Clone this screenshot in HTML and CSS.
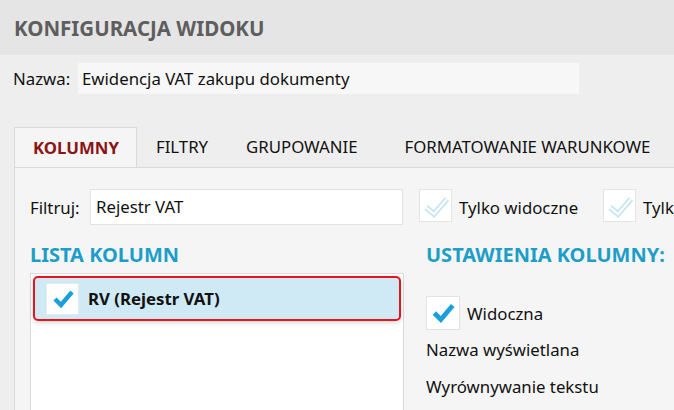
FILE: index.html
```html
<!DOCTYPE html>
<html lang="pl">
<head>
<meta charset="UTF-8">
<title>Konfiguracja widoku</title>
<link rel="stylesheet" href="styles.css">
</head>
<body>
    <div class="header">
        <h1>KONFIGURACJA WIDOKU</h1>
    </div>
    <div class="name-row">
        <span class="label">Nazwa:</span>
        <div class="name-input">Ewidencja VAT zakupu dokumenty</div>
    </div>

    <div class="tabs">
        <div class="tab active">KOLUMNY</div>
        <div class="tab">FILTRY</div>
        <div class="tab">GRUPOWANIE</div>
        <div class="tab wide">FORMATOWANIE WARUNKOWE</div>
    </div>

    <div class="panel">
        <div class="filter-row">
            <span class="label">Filtruj:</span>
            <div class="filter-input">Rejestr VAT</div>
            <div class="check faded">
                <svg viewBox="0 0 31 31" width="31" height="31">
                    <polyline points="6,17.5 14,24 27,9" fill="none" stroke="#bfe2f3" stroke-width="5.5"/>
                    <polyline points="6,17.5 14,24 27,9" fill="none" stroke="#fff" stroke-width="2.5"/>
                </svg>
            </div>
            <span class="check-label wide-label">Tylko widoczne</span>
            <div class="check faded">
                <svg viewBox="0 0 31 31" width="31" height="31">
                    <polyline points="6,17.5 14,24 27,9" fill="none" stroke="#bfe2f3" stroke-width="5.5"/>
                    <polyline points="6,17.5 14,24 27,9" fill="none" stroke="#fff" stroke-width="2.5"/>
                </svg>
            </div>
            <span class="check-label">Tylko wybrane</span>
        </div>

        <div class="columns">
            <div class="col-left">
                <h2>LISTA KOLUMN</h2>
                <div class="list">
                    <div class="list-item selected">
                        <div class="check small">
                            <svg viewBox="0 0 24 24" width="24" height="24"><polyline points="4,12 10,18 21,5" fill="none" stroke="#1a9fdc" stroke-width="4.4"/></svg>
                        </div>
                        <span>RV (Rejestr VAT)</span>
                    </div>
                </div>
            </div>
            <div class="col-right">
                <h2>USTAWIENIA KOLUMNY:</h2>
                <div class="setting">
                    <div class="check">
                        <svg viewBox="0 0 24 24" width="26" height="26"><polyline points="4,12 10,18 21,5" fill="none" stroke="#1a9fdc" stroke-width="4.4"/></svg>
                    </div>
                    <span class="check-label">Widoczna</span>
                </div>
                <div class="setting-text">Nazwa wyświetlana</div>
                <div class="setting-text">Wyrównywanie tekstu</div>
            </div>
        </div>
    </div>
</body>
</html>
```

FILE: styles.css
```css
body {
    margin: 0;
    background: #eeeeee;
    font-family: "Noto Sans", "Open Sans", sans-serif;
    font-size: 16.8px;
    color: #111;
    overflow: hidden;
    height: 410px;
}
.header {
    height: 55px;
    background: #e5e5e5;
    display: flex;
    align-items: center;
    padding-left: 14px;
}
h1 {
    margin: 0;
    font-size: 20.5px;
    font-weight: bold;
    color: #5e5e5e;
}
.name-row {
    display: flex;
    align-items: center;
    margin-top: 8px;
    padding-left: 13px;
}
.name-row .label {
    width: 65px;
}
.name-input {
    width: 497px;
    height: 31px;
    line-height: 31px;
    padding-left: 4px;
    background: #f7f7f7;
    white-space: nowrap;
}
.tabs {
    display: flex;
    margin: 33px 0 0 14px;
    height: 40px;
    border-bottom: 1px solid #dadada;
    white-space: nowrap;
}
.tab {
    padding: 0 19px;
    line-height: 40px;
}
.tab.active {
    background: #f5f5f5;
    border: 1px solid #dadada;
    border-bottom: none;
    color: #8b1414;
    font-weight: bold;
    line-height: 39px;
    padding: 0 17px 0 18px;
}
.tab.wide {
    margin-left: 9px;
}
.panel {
    margin-left: 14px;
    background: #f5f5f5;
    border-left: 1px solid #dadada;
    padding: 21px 0 0 15px;
    height: 221px;
    overflow: hidden;
}
.filter-row {
    display: flex;
    align-items: center;
    height: 36px;
}
.filter-row > * {
    flex-shrink: 0;
}
.filter-row .label {
    width: 60px;
}
.filter-input {
    width: 306px;
    height: 34px;
    line-height: 34px;
    padding-left: 5px;
    background: #fff;
    border: 1px solid #e2e2e2;
    margin-right: 16px;
}
.check {
    width: 32px;
    height: 32px;
    background: #fff;
    border: 1px solid #e2e2e2;
    display: flex;
    align-items: center;
    justify-content: center;
    flex-shrink: 0;
}
.check.faded {
    width: 31px;
    height: 31px;
    border: 1px solid #e4e4e4;
    align-self: flex-start;
}
.check-label {
    margin-left: 7px;
    white-space: nowrap;
}
.wide-label {
    width: 144px;
}
.columns {
    display: flex;
    margin-top: 18px;
}
h2 {
    margin: 0;
    font-size: 20px;
    font-weight: bold;
    color: #1d9ec9;
    line-height: 24px;
    white-space: nowrap;
}
.col-left {
    width: 374px;
    flex-shrink: 0;
}
.list {
    margin-top: 6px;
    height: 200px;
    background: #fff;
    border: 1px solid #dadada;
    padding: 2px;
}
.list-item {
    display: flex;
    align-items: center;
    height: 41px;
    padding-left: 11px;
    font-weight: bold;
}
.list-item.selected {
    background: #cfe9f5;
    border: 2px solid #e8131b;
    border-radius: 5px;
    box-shadow: 0 2px 4px rgba(0, 0, 0, 0.15);
}
.check.small {
    width: 31px;
    height: 30px;
    border-color: #dcecf3;
    margin-right: 9px;
}
.col-right {
    margin-left: 22px;
}
.setting {
    display: flex;
    align-items: center;
    margin-top: 29px;
}
.setting-text {
    margin-top: 8px;
    line-height: 24px;
}
.setting-text + .setting-text {
    margin-top: 13px;
}
```
